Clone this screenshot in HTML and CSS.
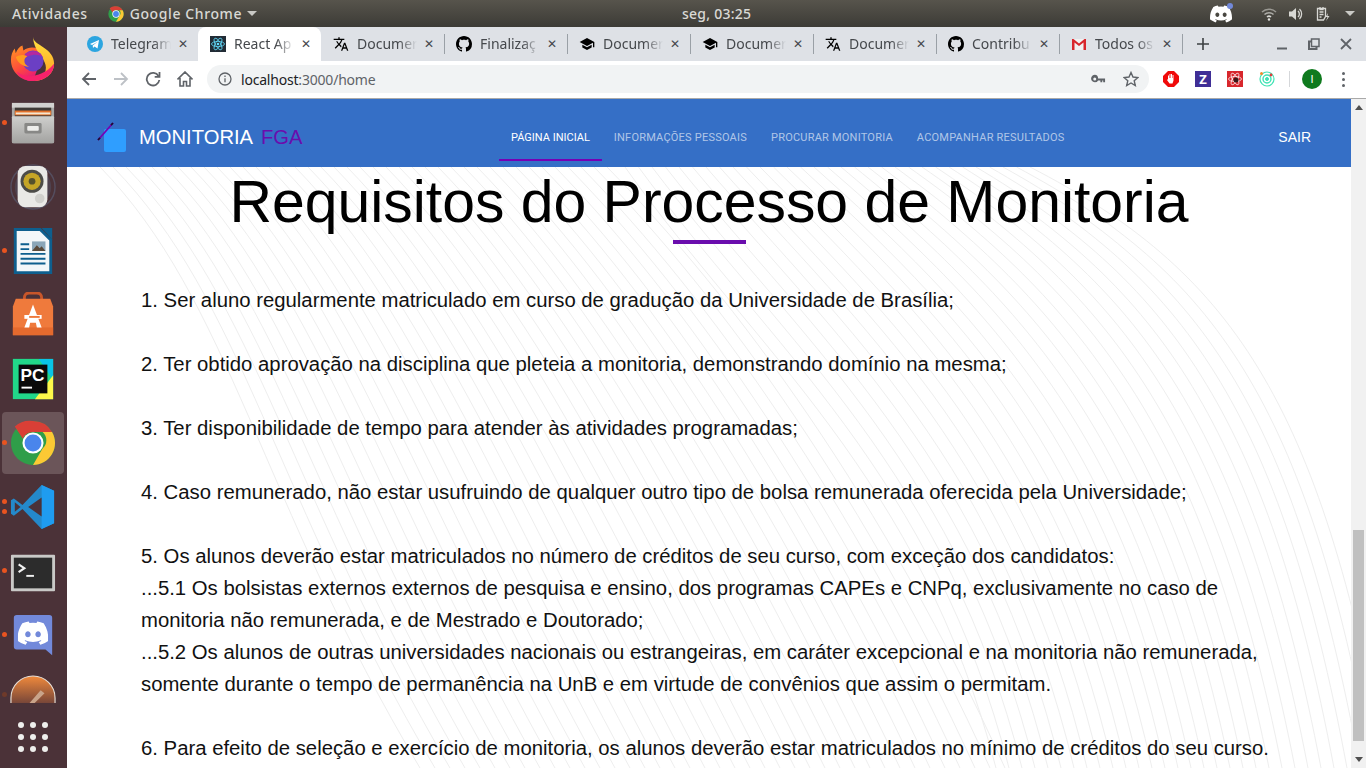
FILE: index.html
```html
<!DOCTYPE html>
<html lang="pt-BR">
<head>
    <meta charset="UTF-8">
    <title>React App</title>
    <link rel="stylesheet" href="styles.css">
</head>
<body>
    <svg class="icon-defs" aria-hidden="true">
        <symbol id="i-chrome" viewBox="0 0 48 48">
            <circle cx="24" cy="24" r="23" fill="#2f9e49"/>
            <path d="M24 1a23 23 0 0 1 19.9 11.5H24a11.5 11.5 0 0 0-10.6 7L5 6.9A23 23 0 0 1 24 1z" fill="#d93f36"/>
            <path d="M43.9 12.500A23 23 0 0 1 24 47l10-17.200a11.500 11.500 0 0 0 0-17.300z" fill="#fcc934"/>
            <circle cx="24" cy="24" r="11" fill="#fff"/>
            <circle cx="24" cy="24" r="8.800" fill="#4a85ec"/>
        </symbol>
        <symbol id="i-github" viewBox="0 0 16 16">
            <path d="M8 0C3.58 0 0 3.58 0 8c0 3.54 2.29 6.53 5.47 7.59.4.07.55-.17.55-.38 0-.19-.01-.82-.01-1.49-2.01.37-2.53-.49-2.69-.94-.09-.23-.48-.94-.82-1.13-.28-.15-.68-.52-.01-.53.63-.01 1.08.58 1.23.82.72 1.21 1.87.87 2.33.66.07-.52.28-.87.51-1.07-1.78-.2-3.64-.89-3.64-3.95 0-.87.31-1.59.82-2.15-.08-.2-.36-1.02.08-2.12 0 0 .67-.21 2.2.82.64-.18 1.32-.27 2-.27.68 0 1.36.09 2 .27 1.53-1.04 2.2-.82 2.2-.82.44 1.1.16 1.92.08 2.12.51.56.82 1.27.82 2.15 0 3.07-1.87 3.75-3.65 3.95.29.25.54.73.54 1.48 0 1.07-.01 1.93-.01 2.2 0 .21.15.46.55.38A8.013 8.013 0 0016 8c0-4.42-3.58-8-8-8z"/>
        </symbol>
        <symbol id="i-translate" viewBox="0 0 24 24">
            <path d="M12.87 15.07l-2.54-2.51.03-.03c1.74-1.94 2.98-4.17 3.71-6.53H17V4h-7V2H8v2H1v1.99h11.17C11.5 7.92 10.44 9.75 9 11.35 8.07 10.32 7.3 9.19 6.69 8h-2c.73 1.63 1.73 3.17 2.98 4.56l-5.09 5.02L4 19l5-5 3.11 3.11.76-2.04zM18.5 10h-2L12 22h2l1.12-3h4.75L21 22h2l-4.5-12zm-2.62 7l1.62-4.33L19.12 17h-3.24z"/>
        </symbol>
        <symbol id="i-school" viewBox="0 0 24 24">
            <path d="M5 13.18v4L12 21l7-3.82v-4L12 17l-7-3.82zM12 3L1 9l11 6 9-4.91V17h2V9L12 3z"/>
        </symbol>
        <symbol id="i-discord" viewBox="0 0 24 24">
            <path d="M20.317 4.37a19.791 19.791 0 0 0-4.885-1.515.074.074 0 0 0-.079.037c-.21.375-.444.864-.608 1.25a18.27 18.27 0 0 0-5.487 0 12.64 12.64 0 0 0-.617-1.25.077.077 0 0 0-.079-.037A19.736 19.736 0 0 0 3.677 4.37a.07.07 0 0 0-.032.027C.533 9.046-.32 13.58.099 18.057a.082.082 0 0 0 .031.057 19.9 19.9 0 0 0 5.993 3.03.078.078 0 0 0 .084-.028c.462-.63.874-1.295 1.226-1.994a.076.076 0 0 0-.041-.106 13.107 13.107 0 0 1-1.872-.892.077.077 0 0 1-.008-.128 10.2 10.2 0 0 0 .372-.292.074.074 0 0 1 .077-.01c3.928 1.793 8.18 1.793 12.062 0a.074.074 0 0 1 .078.01c.12.098.246.198.373.292a.077.077 0 0 1-.006.127 12.299 12.299 0 0 1-1.873.892.077.077 0 0 0-.041.107c.36.698.772 1.362 1.225 1.993a.076.076 0 0 0 .084.028 19.839 19.839 0 0 0 6.002-3.03.077.077 0 0 0 .032-.054c.5-5.177-.838-9.674-3.549-13.66a.061.061 0 0 0-.031-.03zM8.02 15.33c-1.183 0-2.157-1.085-2.157-2.419 0-1.333.956-2.419 2.157-2.419 1.21 0 2.176 1.096 2.157 2.42 0 1.333-.956 2.418-2.157 2.418zm7.975 0c-1.183 0-2.157-1.085-2.157-2.419 0-1.333.955-2.419 2.157-2.419 1.21 0 2.176 1.096 2.157 2.42 0 1.333-.946 2.418-2.157 2.418z"/>
        </symbol>
    </svg>

    <header class="topbar">
        <div class="topbar-left">
            <span class="topbar-item">Atividades</span>
            <span class="topbar-app">
                <svg class="topbar-chrome"><use href="#i-chrome"/></svg>
                <span class="topbar-item">Google Chrome</span>
                <span class="caret"></span>
            </span>
        </div>
        <span class="topbar-item topbar-clock">seg, 03:25</span>
        <div class="topbar-right">
            <span class="discord-tray">
                <svg class="tray-discord"><use href="#i-discord"/></svg>
                <span class="tray-badge"></span>
            </span>
            <svg class="tray-icon" viewBox="0 0 16 16" fill="none" stroke="#d8d8d4" stroke-width="1.500">
                <path d="M1 6a10 10 0 0 1 14 0" opacity=".55"/>
                <path d="M3.500 8.500a6.500 6.500 0 0 1 9 0" opacity=".7"/>
                <path d="M6 11a3 3 0 0 1 4 0"/>
                <circle cx="8" cy="13.500" r="1.200" fill="#e4e4e0" stroke="none"/>
            </svg>
            <svg class="tray-icon" viewBox="0 0 16 16" fill="#d8d8d4">
                <path d="M1 5.500h3L8 2v12l-4-3.500H1z"/>
                <path d="M10 5a4 4 0 0 1 0 6M11.500 3a7 7 0 0 1 0 10" fill="none" stroke="#d8d8d4" stroke-width="1.300"/>
            </svg>
            <svg class="tray-icon" viewBox="0 0 16 16" fill="none" stroke="#d8d8d4" stroke-width="1.300">
                <path d="M2.500 2.500h8v8l-2 3.500h-6z"/>
                <path d="M5 1v2.500h3V1M4.500 6h4M4.500 8.500h4M4.500 11h2"/>
                <path d="M13 7l-2.500 4h2L11 15l3.500-5h-2z" fill="#d8d8d4" stroke="none"/>
            </svg>
            <span class="caret"></span>
        </div>
    </header>

    <div class="desktop">
        <nav class="dock">
            <div class="dock-item">
                <svg class="dock-icon" viewBox="0 0 48 48">
                    <defs>
                        <linearGradient id="ff-body" x1="0" y1="0" x2=".6" y2="1">
                            <stop offset="0" stop-color="#ff9a1f"/>
                            <stop offset=".6" stop-color="#ff4a3d"/>
                            <stop offset="1" stop-color="#e3157e"/>
                        </linearGradient>
                        <linearGradient id="ff-top" x1="0" y1="0" x2="0" y2="1">
                            <stop offset="0" stop-color="#ffe341"/>
                            <stop offset="1" stop-color="#ff9a1f"/>
                        </linearGradient>
                    </defs>
                    <path d="M24 47C11 47 1 37 1 25c0-5 1.500-9 4-12l1 5c1.500-4 4-7 7-8l1 5c3-2 6-3 9-3 5 0 9 2 12 5z" fill="url(#ff-body)"/>
                    <path d="M24 1c1 6 6 7 11 11 6 4 11 9 11 17 0 10-9 18-22 18 12-3 16-12 12-20C33 20 25 15 24 1z" fill="url(#ff-top)"/>
                    <path d="M46 29c0 10-9 18-22 18-8 0-14-4-17-10 6 5 13 6 20 4 8-2 14-6 19-12z" fill="#f7226b"/>
                    <circle cx="24" cy="26" r="11" fill="#6b3fc4"/>
                    <path d="M13 24c2-6 8-9 13-8 4 .6 7 3 8 6-3-2-7-3-11-2-4 .6-7 2-10 4z" fill="#b5289f"/>
                    <path d="M6 22c3-2 8-3 12-1-2 1-3 3-3 5 0 3 2 5 5 6-7 0-12-4-14-10z" fill="#ff9a1f"/>
                </svg>
            </div>
            <div class="dock-item running">
                <svg class="dock-icon" viewBox="0 0 48 48">
                    <defs>
                        <linearGradient id="cab-front" x1="0" y1="0" x2="0" y2="1">
                            <stop offset="0" stop-color="#cfcfcd"/>
                            <stop offset="1" stop-color="#a3a3a1"/>
                        </linearGradient>
                    </defs>
                    <rect x="2" y="3" width="44" height="42" rx="2" fill="#a9a9a7"/>
                    <rect x="2" y="3" width="44" height="5" fill="#d2d2d0"/>
                    <rect x="5" y="8" width="38" height="10" fill="#3e3a36"/>
                    <rect x="5" y="11" width="38" height="5" fill="#e2702a"/>
                    <rect x="6" y="13" width="36" height="2" fill="#f5e6d0"/>
                    <rect x="2" y="17" width="44" height="28" rx="1" fill="url(#cab-front)"/>
                    <rect x="15" y="24" width="18" height="11" rx="1.500" fill="#888886"/>
                    <rect x="18" y="27" width="12" height="5" rx="1" fill="#eeeeec"/>
                </svg>
            </div>
            <div class="dock-item">
                <svg class="dock-icon" viewBox="0 0 48 48">
                    <circle cx="24" cy="24" r="23" fill="none" stroke="#5d6a85" stroke-width="1.500" opacity=".5"/>
                    <circle cx="24" cy="24" r="19" fill="#55617c" opacity=".35"/>
                    <rect x="8" y="2" width="31" height="43" rx="8" fill="#e9e9e6"/>
                    <circle cx="23" cy="18" r="12" fill="#4c4c48"/>
                    <circle cx="23" cy="18" r="9" fill="#c5a526"/>
                    <circle cx="23" cy="18" r="3.500" fill="#55512c"/>
                    <circle cx="31" cy="36" r="5" fill="#d0d0cc"/>
                </svg>
            </div>
            <div class="dock-item running">
                <svg class="dock-icon" viewBox="0 0 48 48">
                    <path d="M4 0h28l12 12v36H4z" fill="#0e5f8e"/>
                    <path d="M7 3h24l10 10v32H7z" fill="#f3f7f9"/>
                    <path d="M33 0h11v12z" fill="#0e5f8e"/>
                    <path d="M11 17h9M11 22h9M11 27h26M11 32h26M11 37h26" stroke="#0e5f8e" stroke-width="2"/>
                    <rect x="23" y="14" width="14" height="10" fill="#8aa6b8"/>
                    <path d="M23 24l5-6 3 3 2-2 4 5z" fill="#5a4a3a"/>
                </svg>
            </div>
            <div class="dock-item">
                <svg class="dock-icon" viewBox="0 0 48 48">
                    <path d="M15 9V6c0-3 2-5 5-5h8c3 0 5 2 5 5v3" fill="none" stroke="#c8562a" stroke-width="3"/>
                    <path d="M6 7h36l3 8v30H3V15z" fill="#ef7a3c"/>
                    <rect x="3" y="37" width="42" height="8" fill="#e46a2e"/>
                    <path d="M24 13l9 24h-5l-1-5h-6l-1 5h-5z" fill="#fff"/>
                    <rect x="15" y="24" width="18" height="4" fill="#fff"/>
                    <rect x="20" y="25" width="11" height="2" fill="#ef7a3c"/>
                </svg>
            </div>
            <div class="dock-item">
                <svg class="dock-icon" viewBox="0 0 48 48">
                    <rect x="3" y="3" width="42" height="42" fill="#21d789"/>
                    <path d="M30 3h15v22z" fill="#09c4e6"/>
                    <path d="M26 45l19-25v25z" fill="#fcf84a"/>
                    <rect x="9" y="9" width="30" height="30" fill="#0a0a0a"/>
                    <text class="pc-text" x="11" y="26">PC</text>
                    <rect x="12" y="32" width="11" height="2" fill="#fff"/>
                </svg>
            </div>
            <div class="dock-item running active">
                <svg class="dock-icon"><use href="#i-chrome"/></svg>
            </div>
            <div class="dock-item double">
                <svg class="dock-icon" viewBox="0 0 48 48">
                    <path d="M33 1L13 22 4 15l-3 2v14l3 2 9-7 20 21 13-6V7z" fill="#2489ca"/>
                    <path d="M33 1l13 6v34l-13 6z" fill="#1f9cf0"/>
                    <path d="M33 14L19 24l14 10z" fill="#4b3238"/>
                    <path d="M5 19l6 5-6 5z" fill="#4b3238"/>
                </svg>
            </div>
            <div class="dock-item running">
                <svg class="dock-icon terminal" viewBox="0 0 48 48">
                    <rect x="1" y="5" width="46" height="38" rx="1" fill="#c9c9c7"/>
                    <rect x="4" y="8" width="40" height="32" fill="#2c2c2c"/>
                    <path d="M9 15l6 4-6 4" fill="none" stroke="#f2f2f2" stroke-width="2.200"/>
                    <rect x="17" y="26" width="8" height="2" fill="#f2f2f2"/>
                </svg>
            </div>
            <div class="dock-item running">
                <svg class="dock-icon" viewBox="0 0 48 48">
                    <path d="M7 3h34a3 3 0 0 1 3 3v39l-7-6H7a3 3 0 0 1-3-3V6a3 3 0 0 1 3-3z" fill="#7289da"/>
                    <svg x="8" y="6" width="32" height="32" fill="#fff"><use href="#i-discord"/></svg>
                </svg>
            </div>
            <div class="dock-item dim">
                <svg class="dock-icon" viewBox="0 0 48 48">
                    <defs>
                        <linearGradient id="post-fade" x1="0" y1="0" x2="0" y2="1">
                            <stop offset="0" stop-color="#f08a3c"/>
                            <stop offset="1" stop-color="#6d4038"/>
                        </linearGradient>
                    </defs>
                    <path d="M1 32v-8a23 23 0 0 1 46 0v8z" fill="url(#post-fade)" stroke="#e8e0d8" stroke-width="1.200"/>
                    <path d="M18 32l14-16 4 3-13 13z" fill="#c9a48a"/>
                </svg>
            </div>
            <div class="dock-apps">
                <span></span><span></span><span></span>
                <span></span><span></span><span></span>
                <span></span><span></span><span></span>
            </div>
        </nav>

        <div class="browser">
            <div class="tabstrip">
                <div class="tab">
                    <svg class="tab-icon" viewBox="0 0 16 16">
                        <circle cx="8" cy="8" r="8" fill="#2ca5e0"/>
                        <path d="M3 8l9-4-1.500 8.500-3-2-1.500 1.500-.3-2.500L11 5.500 5 9z" fill="#fff"/>
                    </svg>
                    <span class="tab-title">Telegram</span>
                    <span class="tab-close">✕</span>
                </div>
                <div class="tab active">
                    <svg class="tab-icon" viewBox="0 0 16 16">
                        <rect width="16" height="16" fill="#222c36"/>
                        <g fill="none" stroke="#61dafb" stroke-width=".8">
                            <ellipse cx="8" cy="8" rx="6.500" ry="2.600"/>
                            <ellipse cx="8" cy="8" rx="6.500" ry="2.600" transform="rotate(60 8 8)"/>
                            <ellipse cx="8" cy="8" rx="6.500" ry="2.600" transform="rotate(120 8 8)"/>
                        </g>
                        <circle cx="8" cy="8" r="1.300" fill="#61dafb"/>
                    </svg>
                    <span class="tab-title">React Ap</span>
                    <span class="tab-close">✕</span>
                </div>
                <div class="tab">
                    <svg class="tab-icon"><use href="#i-translate"/></svg>
                    <span class="tab-title">Documer</span>
                    <span class="tab-close">✕</span>
                </div>
                <div class="tab sep">
                    <svg class="tab-icon"><use href="#i-github"/></svg>
                    <span class="tab-title">Finalizaç</span>
                    <span class="tab-close">✕</span>
                </div>
                <div class="tab sep">
                    <svg class="tab-icon"><use href="#i-school"/></svg>
                    <span class="tab-title">Documer</span>
                    <span class="tab-close">✕</span>
                </div>
                <div class="tab sep">
                    <svg class="tab-icon"><use href="#i-school"/></svg>
                    <span class="tab-title">Documer</span>
                    <span class="tab-close">✕</span>
                </div>
                <div class="tab sep">
                    <svg class="tab-icon"><use href="#i-translate"/></svg>
                    <span class="tab-title">Documer</span>
                    <span class="tab-close">✕</span>
                </div>
                <div class="tab sep">
                    <svg class="tab-icon"><use href="#i-github"/></svg>
                    <span class="tab-title">Contribu</span>
                    <span class="tab-close">✕</span>
                </div>
                <div class="tab sep">
                    <svg class="tab-icon" viewBox="0 0 16 16">
                        <path d="M1 3h14v11H1z" fill="#f1f1f1"/>
                        <path d="M1 3v11h2.500V6.500L8 10l4.500-3.500V14H15V3h-1.500L8 7.500 2.500 3z" fill="#d8262c"/>
                    </svg>
                    <span class="tab-title">Todos os</span>
                    <span class="tab-close">✕</span>
                </div>
                <span class="tab-end"></span>
                <svg class="tab-new" viewBox="0 0 12 12"><path d="M6 0v12M0 6h12" stroke="#3c4043" stroke-width="1.600"/></svg>
                <div class="window-controls">
                    <svg viewBox="0 0 12 12"><path d="M1 10.500h10" stroke="#5f6368" stroke-width="2"/></svg>
                    <svg viewBox="0 0 12 12" fill="none" stroke="#5f6368" stroke-width="1.500"><rect x="3.500" y="1" width="7.500" height="7.500"/><path d="M3.500 3.500H1V11h7.500V8.500" stroke-width="2"/></svg>
                    <svg viewBox="0 0 12 12"><path d="M1 1l10 10M11 1L1 11" stroke="#5f6368" stroke-width="1.800"/></svg>
                </div>
            </div>

            <div class="toolbar">
                <svg class="tool-icon" viewBox="0 0 16 16" fill="none" stroke="#5f6368" stroke-width="1.800"><path d="M15 8H2M8 2L2 8l6 6"/></svg>
                <svg class="tool-icon" viewBox="0 0 16 16" fill="none" stroke="#bdc1c6" stroke-width="1.800"><path d="M1 8h13M8 2l6 6-6 6"/></svg>
                <svg class="tool-icon" viewBox="0 0 16 16" fill="none" stroke="#5f6368" stroke-width="1.800"><path d="M13.500 5A6.300 6.300 0 1 0 14.300 9"/><path d="M14.500 1v4.800H9.700" /></svg>
                <svg class="tool-icon" viewBox="0 0 16 16" fill="none" stroke="#5f6368" stroke-width="1.600"><path d="M.5 8.500L8 1l7.500 7.500M3 7v8h3.500v-4.500h3V15H13V7"/></svg>
                <div class="omnibox">
                    <svg class="omni-info" viewBox="0 0 14 14" fill="none" stroke="#5f6368" stroke-width="1.300"><circle cx="7" cy="7" r="6"/><path d="M7 6.200v4M7 3.500v1.400"/></svg>
                    <span class="url">localhost<span class="url-rest">:3000/home</span></span>
                    <svg class="omni-key" viewBox="0 0 16 10" fill="#5f6368"><path d="M4 0a4 4 0 1 0 3.600 6H10v2h2V6h1v2h2V4H7.600A4 4 0 0 0 4 0zm0 2.800a1.600 1.600 0 1 1 0 3.200 1.600 1.600 0 0 1 0-3.200z" transform="translate(0 .500)"/></svg>
                    <svg class="omni-star" viewBox="0 0 16 16" fill="none" stroke="#5f6368" stroke-width="1.400"><path d="M8 1.500l2 4.500 4.900.5-3.700 3.200 1.100 4.800L8 12l-4.300 2.500 1.100-4.800L1.100 6.500 6 6z"/></svg>
                </div>
                <div class="extensions">
                    <svg class="ext-icon" viewBox="0 0 16 16">
                        <path d="M5 0h6l5 5v6l-5 5H5l-5-5V5z" fill="#f00a0a"/>
                        <path d="M5 8V4.500h1V7h.5V3h1v4H8V3h1v4h.5V4h1v5.500L9.500 12.500h-3L4 9l.8-.8z" fill="#fff"/>
                    </svg>
                    <span class="ext-z">Z</span>
                    <svg class="ext-icon" viewBox="0 0 16 16">
                        <rect width="16" height="16" fill="#d8262c"/>
                        <g fill="none" stroke="#fff" stroke-width=".7">
                            <ellipse cx="8" cy="8" rx="6.500" ry="2.500"/>
                            <ellipse cx="8" cy="8" rx="6.500" ry="2.500" transform="rotate(60 8 8)"/>
                            <ellipse cx="8" cy="8" rx="6.500" ry="2.500" transform="rotate(120 8 8)"/>
                        </g>
                        <circle cx="9" cy="9" r="2.500" fill="#3a1a1a"/>
                    </svg>
                    <svg class="ext-icon" viewBox="0 0 16 16" fill="none" stroke="#3fe3b4">
                        <circle cx="8" cy="8" r="7" stroke-width="1.200"/>
                        <circle cx="8" cy="8" r="4" stroke-width="1.400"/>
                        <circle cx="8" cy="8" r="1.500" fill="#3fe3b4"/>
                        <circle cx="2.500" cy="2.500" r="1.500" fill="#f08a2c" stroke="none"/>
                        <circle cx="12" cy="4" r="1.400" fill="#e33b3b" stroke="none"/>
                    </svg>
                </div>
                <span class="toolbar-sep"></span>
                <span class="avatar">I</span>
                <div class="menu-dots"><span></span><span></span><span></span></div>
            </div>

            <div class="page">
                <div class="page-content">
                    <svg class="wave-bg" id="waveBg" width="1284" height="601" viewBox="67 167 1284 601"></svg>
                    <header class="navbar">
                        <div class="brand">
                            <svg class="brand-logo" viewBox="0 0 30 30">
                                <rect x="7" y="7" width="22" height="23" rx="2" fill="#2f9eff"/>
                                <path d="M1 18L16 1" stroke="#7600b5" stroke-width="1.800"/>
                                <path d="M1 18l2-2.200M14 3.200L16 1" stroke="#1a1030" stroke-width="1.800"/>
                            </svg>
                            <span class="brand-name">MONITORIA</span>
                            <span class="brand-sub">FGA</span>
                        </div>
                        <div class="nav-tabs">
                            <a class="nav-tab selected">Página Inicial</a>
                            <a class="nav-tab">Informações Pessoais</a>
                            <a class="nav-tab">Procurar Monitoria</a>
                            <a class="nav-tab">Acompanhar Resultados</a>
                        </div>
                        <a class="logout">SAIR</a>
                    </header>
                    <main class="requirements">
                        <h1>Requisitos do Processo de Monitoria</h1>
                        <div class="title-bar"></div>
                        <p>1. Ser aluno regularmente matriculado em curso de gradução da Universidade de Brasília;</p>
                        <p>2. Ter obtido aprovação na disciplina que pleteia a monitoria, demonstrando domínio na mesma;</p>
                        <p>3. Ter disponibilidade de tempo para atender às atividades programadas;</p>
                        <p>4. Caso remunerado, não estar usufruindo de qualquer outro tipo de bolsa remunerada oferecida pela Universidade;</p>
                        <p>5. Os alunos deverão estar matriculados no número de créditos de seu curso, com exceção dos candidatos:<br>
                        ...5.1 Os bolsistas externos externos de pesquisa e ensino, dos programas CAPEs e CNPq, exclusivamente no caso de monitoria não remunerada, e de Mestrado e Doutorado;<br>
                        ...5.2 Os alunos de outras universidades nacionais ou estrangeiras, em caráter excepcional e na monitoria não remunerada, somente durante o tempo de permanência na UnB e em virtude de convênios que assim o permitam.</p>
                        <p>6. Para efeito de seleção e exercício de monitoria, os alunos deverão estar matriculados no mínimo de créditos do seu curso.</p>
                    </main>
                </div>
                <div class="scrollbar">
                    <span class="arrow-up"></span>
                    <div class="scroll-track"><div class="scroll-thumb"></div></div>
                    <span class="arrow-down"></span>
                </div>
            </div>
        </div>
    </div>
    <script src="waves.js"></script>
</body>
</html>
```

FILE: styles.css
```css
* {
    box-sizing: border-box;
}

body {
    margin: 0;
    width: 1366px;
    height: 768px;
    overflow: hidden;
    display: flex;
    flex-direction: column;
    font-family: "Noto Sans", sans-serif;
    background: #4b3238;
}

.icon-defs {
    display: none;
}

/* ubuntu top bar */
.topbar {
    height: 27px;
    flex: none;
    display: flex;
    align-items: center;
    justify-content: space-between;
    position: relative;
    padding: 0 11px 0 12px;
    background: linear-gradient(#57544c, #3c3b36);
}

.topbar-left,
.topbar-right,
.topbar-app {
    display: flex;
    align-items: center;
}

.topbar-left {
    gap: 20px;
}

.topbar-app {
    gap: 6px;
}

.topbar-item {
    color: #d9d9d5;
    font-size: 14px;
    font-weight: 500;
    letter-spacing: 0.6px;
}

.topbar-chrome {
    width: 16px;
    height: 16px;
}

.topbar-clock {
    position: absolute;
    left: 682px;
    letter-spacing: 0.25px;
}

.caret {
    width: 0;
    height: 0;
    margin-left: 3px;
    border-left: 5px solid transparent;
    border-right: 5px solid transparent;
    border-top: 5px solid #c9c9c5;
}

.topbar-app .caret {
    margin-left: -1px;
}

.topbar-right {
    gap: 11px;
}

.discord-tray {
    position: relative;
    display: flex;
    margin-right: 18px;
}

.tray-discord {
    width: 22px;
    height: 22px;
    fill: #fff;
}

.tray-badge {
    position: absolute;
    top: 0;
    right: -1px;
    width: 6px;
    height: 6px;
    border-radius: 50%;
    background: #7289da;
}

.tray-icon {
    width: 16px;
    height: 16px;
}

/* dock + browser */
.desktop {
    flex: 1;
    display: flex;
    min-height: 0;
}

.dock {
    width: 67px;
    flex: none;
    display: flex;
    flex-direction: column;
    align-items: center;
    padding-right: 1px;
    background: #4b3238;
}

.dock-item {
    width: 62px;
    height: 64px;
    flex: none;
    display: flex;
    align-items: center;
    justify-content: center;
    position: relative;
    border-radius: 4px;
}

.dock-icon {
    width: 46px;
    height: 46px;
}

.dock-icon.terminal {
    margin-top: 3px;
}

.pc-text {
    fill: #fff;
    font-family: "Liberation Sans", Arial, sans-serif;
    font-size: 18px;
    font-weight: 700;
}

.dock-item.active {
    height: 62px;
    margin: 1px 0;
    background: #6b5559;
}

.dock-item.running::before,
.dock-item.double::before,
.dock-item.double::after {
    content: "";
    position: absolute;
    left: 0;
    top: 50%;
    width: 5px;
    height: 5px;
    margin-top: -3px;
    border-radius: 50%;
    background: #e95420;
}

.dock-item.double::before {
    margin-top: -8px;
}

.dock-item.double::after {
    margin-top: 2px;
}

.dock-item.dim {
    height: 36px;
    align-items: flex-start;
    overflow: hidden;
    padding-top: 8px;
}

.dock-item.dim::before {
    content: "";
    position: absolute;
    left: 0;
    top: 25px;
    width: 5px;
    height: 5px;
    border-radius: 50%;
    background: #6e3a2a;
}

.dock-apps {
    flex: 1;
    width: 30px;
    display: grid;
    grid-template-columns: repeat(3, 6px);
    grid-auto-rows: 6px;
    justify-content: space-between;
    align-content: center;
    row-gap: 6px;
    margin-top: 2px;
}

.dock-apps span {
    border-radius: 50%;
    background: #eeeeec;
}

.browser {
    flex: 1;
    min-width: 0;
    display: flex;
    flex-direction: column;
}

/* tabs */
.tabstrip {
    height: 34px;
    flex: none;
    display: flex;
    align-items: stretch;
    padding-left: 8px;
    background: #dee1e6;
}

.tab {
    width: 123px;
    flex: none;
    display: flex;
    align-items: center;
    position: relative;
    padding-left: 12px;
    border-radius: 8px 8px 0 0;
}

.tab.active {
    background: #fff;
}

.tab.sep::before,
.tab-end {
    content: "";
    position: absolute;
    left: 0;
    top: 7px;
    width: 1px;
    height: 20px;
    background: #9aa0a6;
}

.tab-end {
    position: static;
    flex: none;
    height: 20px;
    margin-top: 7px;
}

.tab-icon {
    width: 16px;
    height: 16px;
    flex: none;
}

.tab-title {
    width: 60px;
    height: 19px;
    margin-left: 8px;
    margin-top: -2px;
    overflow: hidden;
    white-space: nowrap;
    color: #45484c;
    font-size: 14px;
    line-height: 19px;
    -webkit-mask-image: linear-gradient(to right, #000 70%, transparent);
    mask-image: linear-gradient(to right, #000 70%, transparent);
}

.tab-close {
    width: 12px;
    margin-left: 6px;
    color: #45484c;
    font-size: 12px;
    line-height: 1;
    text-align: center;
}

.tab-new {
    width: 12px;
    height: 12px;
    margin: 11px 0 0 14px;
}

.window-controls {
    display: flex;
    align-items: center;
    gap: 20px;
    margin-left: 67px;
}

.window-controls svg {
    width: 12px;
    height: 12px;
}

/* toolbar */
.toolbar {
    height: 37px;
    flex: none;
    display: flex;
    align-items: center;
    padding: 0 0 1px 14px;
    background: #fff;
}

.tool-icon {
    width: 16px;
    height: 16px;
    flex: none;
    margin-right: 16px;
}

.omnibox {
    width: 942px;
    height: 28px;
    display: flex;
    align-items: center;
    margin-left: -2px;
    padding: 0 10px 0 11px;
    border-radius: 14px;
    background: #f1f3f4;
}

.omni-info {
    width: 14px;
    height: 14px;
}

.url {
    margin-left: 9px;
    flex: 1;
    color: #202124;
    font-size: 14px;
    letter-spacing: -0.2px;
}

.url-rest {
    color: #5f6368;
}

.omni-key {
    width: 15px;
    height: 10px;
    margin-right: 17px;
}

.omni-star {
    width: 16px;
    height: 16px;
}

.extensions {
    display: flex;
    align-items: center;
    gap: 16px;
    margin-left: 14px;
}

.ext-icon,
.ext-z {
    width: 16px;
    height: 16px;
    flex: none;
}

.ext-z {
    background: #3f2e96;
    color: #fff;
    font-size: 13px;
    font-weight: 700;
    line-height: 16px;
    text-align: center;
}

.toolbar-sep {
    width: 1px;
    height: 16px;
    margin-left: 14px;
    background: #d5d7da;
}

.avatar {
    width: 20px;
    height: 20px;
    margin-left: 12px;
    border-radius: 50%;
    background: #0f7a1e;
    color: #fff;
    font-family: "Liberation Sans", Arial, sans-serif;
    font-size: 11px;
    line-height: 20px;
    text-align: center;
}

.menu-dots {
    display: flex;
    flex-direction: column;
    gap: 3px;
    margin-left: 20px;
}

.menu-dots span {
    width: 3px;
    height: 3px;
    border-radius: 50%;
    background: #5f6368;
}

/* the page inside chrome */
.page {
    flex: 1;
    min-height: 0;
    display: flex;
    border-top: 1px solid #a9a9a9;
    background: #fff;
}

.page-content {
    flex: 1;
    min-width: 0;
    position: relative;
    overflow: hidden;
}

.wave-bg {
    position: absolute;
    left: 0;
    top: 68px;
}

.navbar {
    height: 68px;
    display: flex;
    align-items: center;
    position: relative;
    background: #356fc6;
}

.brand {
    width: 420px;
    display: flex;
    align-items: center;
    margin-top: 8px;
    padding-left: 30px;
    font-family: "Liberation Sans", Arial, sans-serif;
    font-size: 20.2px;
}

.brand-logo {
    width: 30px;
    height: 30px;
    margin-right: 12px;
}

.brand-name {
    color: #fff;
}

.brand-sub {
    margin-left: 8px;
    color: #6a0dad;
}

.nav-tabs {
    display: flex;
    align-self: flex-start;
    margin-left: 12px;
}

.nav-tab {
    display: flex;
    align-items: center;
    height: 62px;
    padding: 16px 12px 2px;
    color: rgba(255, 255, 255, 0.62);
    font-family: Roboto, sans-serif;
    font-size: 11px;
    font-weight: 400;
    letter-spacing: 0.22px;
    text-transform: uppercase;
    white-space: nowrap;
}

.nav-tab.selected {
    color: #fff;
    border-bottom: 2px solid #7600b5;
    padding-bottom: 0;
    letter-spacing: 0;
}

.logout {
    position: absolute;
    right: 40px;
    top: 30px;
    color: #fff;
    font-family: "Liberation Sans", Arial, sans-serif;
    font-size: 14px;
}

.requirements {
    position: relative;
    padding: 0 74px;
    color: #000;
    font-family: "Liberation Sans", Arial, sans-serif;
    font-size: 20.32px;
    line-height: 32px;
}

.requirements h1 {
    margin: 0;
    color: #000;
    font-size: 58.9px;
    font-weight: 400;
    line-height: 69px;
    text-align: center;
}

.title-bar {
    width: 73px;
    height: 4px;
    margin: 4px auto 40px;
    background: #6a0dad;
}

.requirements p {
    margin: 0 0 32px;
    color: #111;
}

/* scrollbar */
.scrollbar {
    width: 15px;
    flex: none;
    display: flex;
    flex-direction: column;
    align-items: center;
    background: #f1f1f1;
}

.scroll-track {
    flex: 1;
    width: 100%;
    position: relative;
}

.scroll-thumb {
    position: absolute;
    left: 2px;
    right: 2px;
    top: 416px;
    height: 211px;
    background: #c0c0c0;
}

.arrow-up,
.arrow-down {
    width: 0;
    height: 0;
    flex: none;
    border-left: 4px solid transparent;
    border-right: 4px solid transparent;
}

.arrow-up {
    margin: 6px 0 4px;
    border-bottom: 5px solid #505050;
}

.arrow-down {
    margin: 4px 0 6px;
    border-top: 5px solid #505050;
}
```

FILE: waves.js
```js
// faint curved lines behind the text
const NS = 'http://www.w3.org/2000/svg';
const svg = document.getElementById('waveBg');
const curves = [];

// left family, runs diagonally down from the top edge
for (let j = 0; j < 40; j++) {
    const x0 = 100 + 13 * j;
    curves.push(`M${x0} 167C${x0 + 130} 300 ${x0 + 160 + 3 * j} 500 ${420 + 15 * j} 768`);
}

// right family, flattens out then drops steeply near the scrollbar
for (let i = 0; i < 31; i++) {
    const x0 = 1030 - 13.5 * i;
    const c1x = 1230 - 15.9 * i;
    const c2x = 1320 - 13.3 * i;
    const y1 = 270 + 2.6 * i;
    const y2 = 400 + 2.6 * i;
    curves.push(`M${x0} 167C${c1x} ${y1} ${c2x} ${y2} ${1386 - 13 * i} 768`);
}

const path = document.createElementNS(NS, 'path');
path.setAttribute('d', curves.join(''));
path.setAttribute('fill', 'none');
path.setAttribute('stroke', '#eeeeee');
svg.appendChild(path);
```
